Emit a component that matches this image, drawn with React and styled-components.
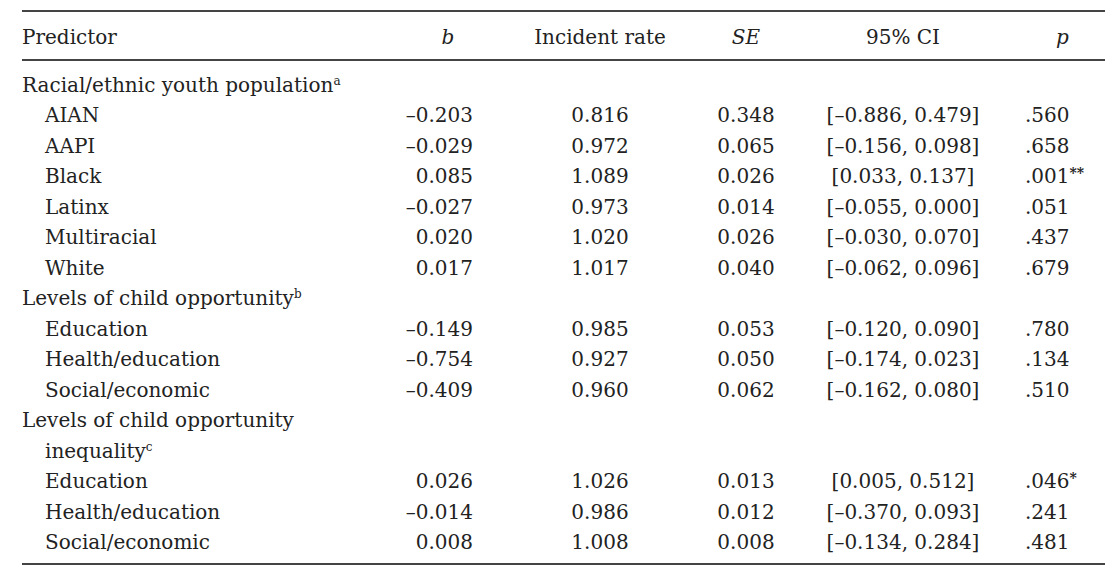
import React from 'react';
import styled, { createGlobalStyle } from 'styled-components';

const GlobalStyle = createGlobalStyle`
  html, body {
    margin: 0;
    padding: 0;
    background: #ffffff;
  }
  body {
    font-family: "DejaVu Serif", "Liberation Serif", serif;
    color: #222;
  }
`;

const COLUMNS = '366px 120px 184px 108px 206px 99px';

const Table = styled.div`
  margin: 10px 0 0 22px;
  width: 1083px;
  font-size: 20px;
  line-height: 30.5px;
  border-top: 2px solid #444;
  border-bottom: 2px solid #444;
`;

const HeadRow = styled.div`
  display: grid;
  grid-template-columns: ${COLUMNS};
  padding: 10px 0 6px;
  border-bottom: 2px solid #444;
`;

const Body = styled.div`
  padding: 9px 0 5px;
`;

const Row = styled.div`
  display: grid;
  grid-template-columns: ${COLUMNS};
  align-items: end;
`;

const Head = styled.div`
  text-align: ${({ align }) => align || 'center'};
  font-style: ${({ italic }) => (italic ? 'italic' : 'normal')};
  padding-left: ${({ shift }) => shift || 0}px;
`;

const Label = styled.div`
  padding-left: ${({ indent }) => (indent ? 46 : 23)}px;
  text-indent: -23px;
`;

const Cell = styled.div`
  text-align: ${({ align }) => align || 'center'};
  padding-right: ${({ padRight }) => padRight || 0}px;
  padding-left: ${({ padLeft }) => padLeft || 0}px;
  white-space: nowrap;
`;

const Note = styled.sup`
  font-size: 12px;
  line-height: 0;
  vertical-align: 7px;
`;

const Stars = styled.sup`
  font-size: 14px;
  line-height: 0;
  vertical-align: 5px;
  font-weight: bold;
`;

const groups = [
  {
    title: 'Racial/ethnic youth population',
    note: 'a',
    rows: [
      ['AIAN', '–0.203', '0.816', '0.348', '[–0.886, 0.479]', '.560'],
      ['AAPI', '–0.029', '0.972', '0.065', '[–0.156, 0.098]', '.658'],
      ['Black', '0.085', '1.089', '0.026', '[0.033, 0.137]', '.001', '**'],
      ['Latinx', '–0.027', '0.973', '0.014', '[–0.055, 0.000]', '.051'],
      ['Multiracial', '0.020', '1.020', '0.026', '[–0.030, 0.070]', '.437'],
      ['White', '0.017', '1.017', '0.040', '[–0.062, 0.096]', '.679'],
    ],
  },
  {
    title: 'Levels of child opportunity',
    note: 'b',
    rows: [
      ['Education', '–0.149', '0.985', '0.053', '[–0.120, 0.090]', '.780'],
      ['Health/education', '–0.754', '0.927', '0.050', '[–0.174, 0.023]', '.134'],
      ['Social/economic', '–0.409', '0.960', '0.062', '[–0.162, 0.080]', '.510'],
    ],
  },
  {
    title: 'Levels of child opportunity inequality',
    note: 'c',
    rows: [
      ['Education', '0.026', '1.026', '0.013', '[0.005, 0.512]', '.046', '*'],
      ['Health/education', '–0.014', '0.986', '0.012', '[–0.370, 0.093]', '.241'],
      ['Social/economic', '0.008', '1.008', '0.008', '[–0.134, 0.284]', '.481'],
    ],
  },
];

const DataRow = ({ row }) => {
  const [name, b, rate, se, ci, p, stars] = row;
  return (
    <Row>
      <Label indent>{name}</Label>
      <Cell align="right" padRight={35}>{b}</Cell>
      <Cell>{rate}</Cell>
      <Cell>{se}</Cell>
      <Cell>{ci}</Cell>
      <Cell align="left" padLeft={19}>
        {p}
        {stars && <Stars>{stars}</Stars>}
      </Cell>
    </Row>
  );
};

export default function App() {
  return (
    <>
      <GlobalStyle />
      <Table>
        <HeadRow>
          <Head align="left">Predictor</Head>
          <Head italic>b</Head>
          <Head>Incident rate</Head>
          <Head italic>SE</Head>
          <Head>95% CI</Head>
          <Head italic shift={14}>p</Head>
        </HeadRow>
        <Body>
          {groups.map((g) => (
            <React.Fragment key={g.title}>
              <Row>
                <Label>
                  {g.title}
                  <Note>{g.note}</Note>
                </Label>
              </Row>
              {g.rows.map((r) => (
                <DataRow key={g.title + r[0]} row={r} />
              ))}
            </React.Fragment>
          ))}
        </Body>
      </Table>
    </>
  );
}
